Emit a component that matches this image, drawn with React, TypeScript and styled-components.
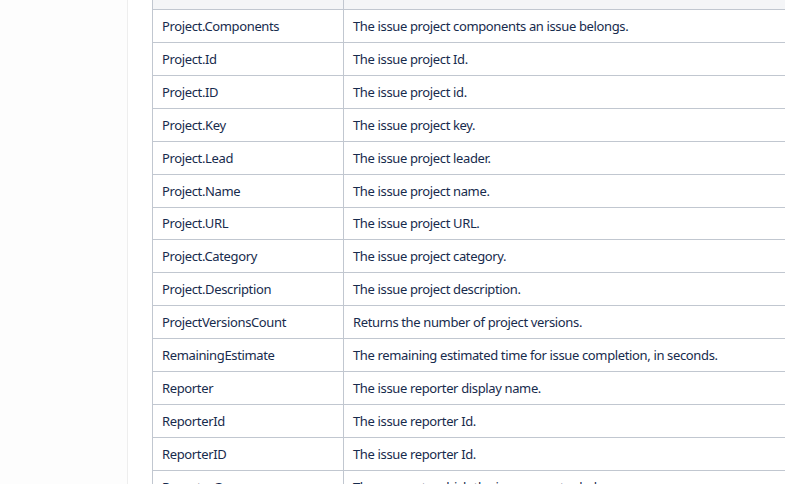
import { FunctionComponent } from 'react'
import styled, { createGlobalStyle } from 'styled-components'

interface IField {
  name: string
  description: string
}

const fields: IField[] = [
  { name: 'Project.Components', description: 'The issue project components an issue belongs.' },
  { name: 'Project.Id', description: 'The issue project Id.' },
  { name: 'Project.ID', description: 'The issue project id.' },
  { name: 'Project.Key', description: 'The issue project key.' },
  { name: 'Project.Lead', description: 'The issue project leader.' },
  { name: 'Project.Name', description: 'The issue project name.' },
  { name: 'Project.URL', description: 'The issue project URL.' },
  { name: 'Project.Category', description: 'The issue project category.' },
  { name: 'Project.Description', description: 'The issue project description.' },
  { name: 'ProjectVersionsCount', description: 'Returns the number of project versions.' },
  { name: 'RemainingEstimate', description: 'The remaining estimated time for issue completion, in seconds.' },
  { name: 'Reporter', description: 'The issue reporter display name.' },
  { name: 'ReporterId', description: 'The issue reporter Id.' },
  { name: 'ReporterID', description: 'The issue reporter Id.' },
  { name: 'ReporterGroups', description: 'The groups to which the issue reporter belongs.' }
]

const GlobalStyle = createGlobalStyle`
  html, body {
    margin: 0;
    padding: 0;
    height: 100%;
    overflow: hidden;
    background: #fff;
  }
  body {
    font-family: 'Segoe UI', 'Noto Sans', 'Open Sans', sans-serif;
  }
`

const App: FunctionComponent = () => {
  return (
    <Page>
      <GlobalStyle />
      <Sidebar />
      <Content>
        <FieldTable>
          <thead>
            <tr>
              <HeadCell $width={191}>Field</HeadCell>
              <HeadCell>Description</HeadCell>
            </tr>
          </thead>
          <tbody>
            {fields.map(field => (
              <tr key={`field__${field.name}`}>
                <Cell>{field.name}</Cell>
                <Cell>{field.description}</Cell>
              </tr>
            ))}
          </tbody>
        </FieldTable>
      </Content>
    </Page>
  )
}

const Page = styled.div`
  display: flex;
  height: 484px;
  overflow: hidden;
`

const Sidebar = styled.aside`
  flex: 0 0 127px;
  background: #fdfdfd;
  border-right: 1px solid #eeeeee;
`

const Content = styled.main`
  flex: 1 1 auto;
  padding-left: 24px;
  overflow: hidden;
`

const FieldTable = styled.table`
  border-collapse: collapse;
  width: 820px;
  margin-top: -24px;
  table-layout: fixed;
  font-size: 13px;
  letter-spacing: -0.36px;
  color: #172b4d;
`

const HeadCell = styled.th<{ $width?: number }>`
  box-sizing: border-box;
  width: ${p => (p.$width ? `${p.$width}px` : 'auto')};
  height: 33px;
  padding: 0 9px;
  background: #f4f5f7;
  border: 1px solid #c1c7d0;
  text-align: left;
  color: transparent;
`

const Cell = styled.td`
  height: 31.93px;
  padding: 0 9px;
  border: 1px solid #c1c7d0;
  white-space: nowrap;
  line-height: 18px;
  vertical-align: middle;
`

export default App
